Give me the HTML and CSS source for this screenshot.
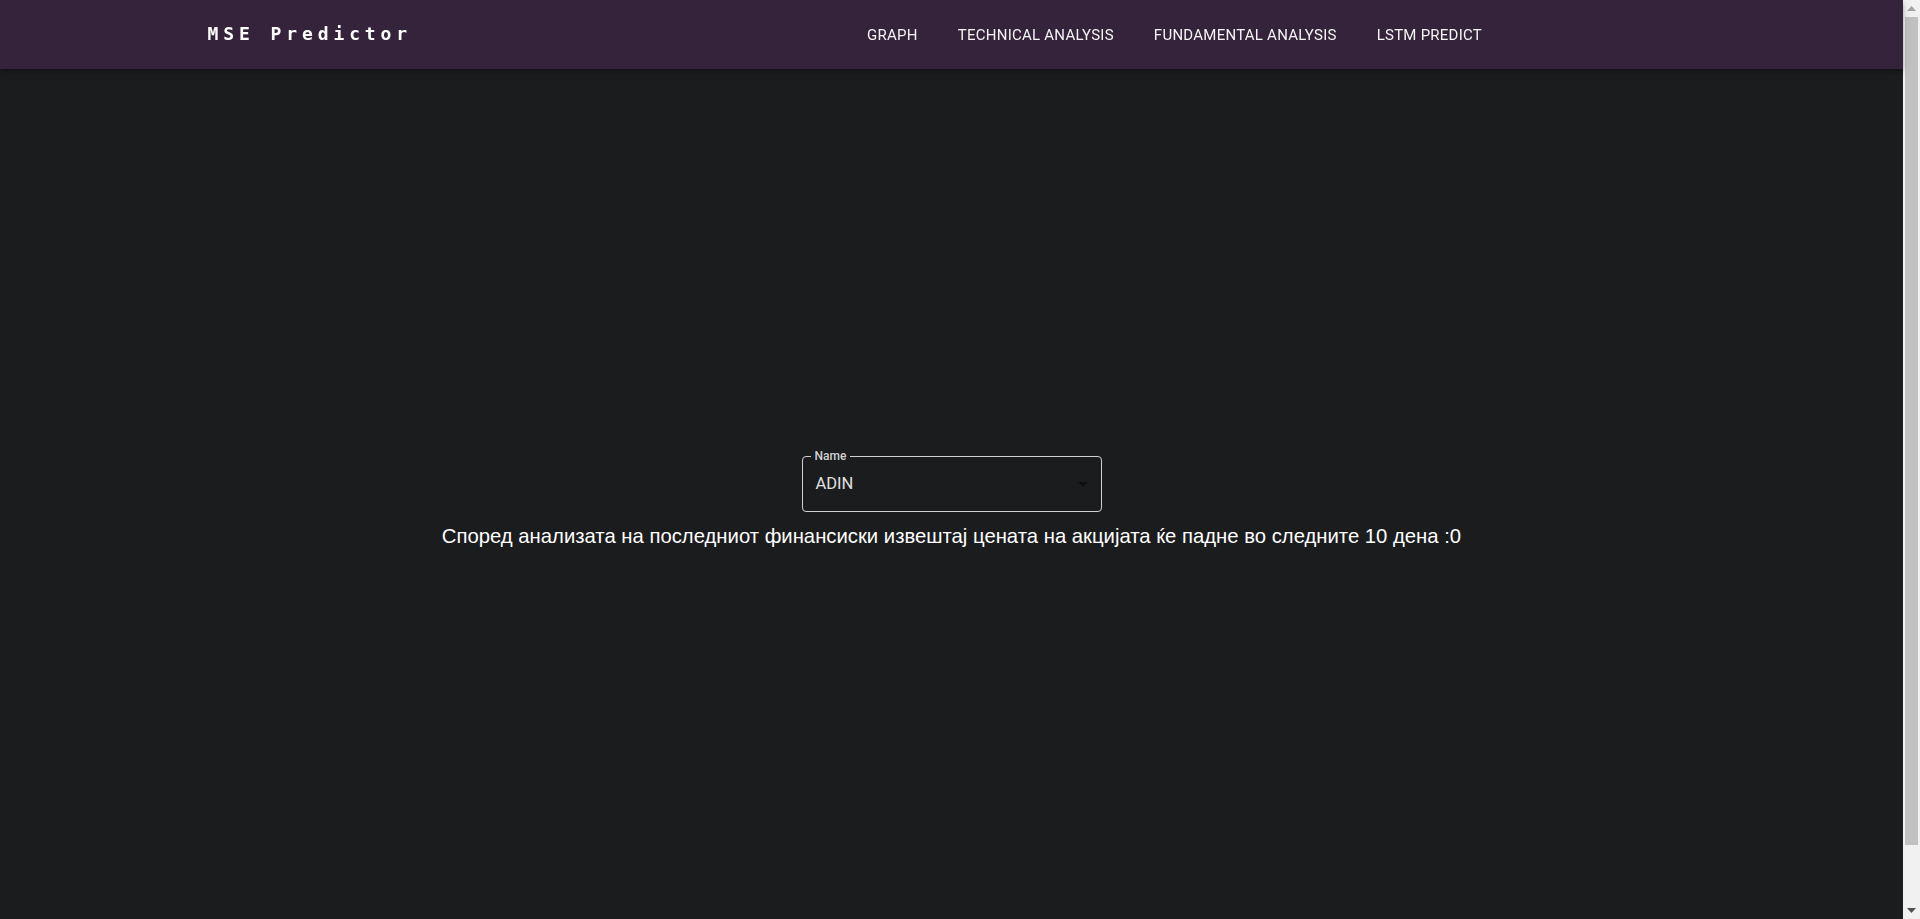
FILE: index.html
```html
<!DOCTYPE html>
<html lang="mk">
<head>
<meta charset="utf-8">
<title>MSE Predictor</title>
<link rel="stylesheet" href="styles.css">
</head>
<body>
<div class="page">
  <header class="appbar">
    <div class="container">
      <div class="logo">MSE Predictor</div>
      <nav class="nav">
        <a class="nav-btn" href="#">Graph</a>
        <a class="nav-btn" href="#">Technical Analysis</a>
        <a class="nav-btn" href="#">Fundamental Analysis</a>
        <a class="nav-btn" href="#">LSTM Predict</a>
      </nav>
    </div>
  </header>
  <main class="main">
    <div class="field">
      <fieldset class="outline"><legend class="legend">Name</legend></fieldset>
      <span class="value">ADIN</span>
      <svg class="arrow" viewBox="0 0 24 24" width="24" height="24"><path d="M7 10l5 5 5-5z"/></svg>
    </div>
    <p class="result">Според анализата на последниот финансиски извештај цената на акцијата ќе падне во следните 10 дена :0</p>
  </main>
</div>
<div class="scrollbar" aria-hidden="true">
  <div class="sb-btn"><svg width="9" height="5" viewBox="0 0 9 5"><path d="M0 5 L4.5 0 L9 5 Z" fill="#a3a3a3"/></svg></div>
  <div class="sb-track"><div class="sb-thumb"></div></div>
  <div class="sb-btn"><svg width="9" height="5" viewBox="0 0 9 5"><path d="M0 0 L4.5 5 L9 0 Z" fill="#505050"/></svg></div>
</div>
</body>
</html>
```

FILE: styles.css
```css
html {
  overflow: hidden;
}
html, body {
  margin: 0;
  padding: 0;
}
body {
  background: #1b1c1e;
  color: #fff;
  font-family: Roboto, "Liberation Sans", sans-serif;
}
.page {
  margin-right: 17px;
}

.appbar {
  background: #34233a;
  height: 69px;
  box-shadow: 0 2px 4px -1px rgba(0,0,0,0.2), 0 4px 5px 0 rgba(0,0,0,0.14), 0 1px 10px 0 rgba(0,0,0,0.12);
  position: relative;
  z-index: 1;
}
.container {
  max-width: 1536px;
  margin: 0 auto;
  padding: 0 24px;
  box-sizing: border-box;
  height: 100%;
  display: flex;
  align-items: center;
}
.logo {
  font-family: "DejaVu Sans Mono", monospace;
  font-weight: 700;
  font-size: 18px;
  letter-spacing: 4.9px;
  color: #fff;
  margin-top: -2px;
}
.nav {
  display: flex;
  margin-left: 435px;
}
.nav-btn {
  font-family: Roboto, sans-serif;
  font-weight: 400;
  font-size: 15px;
  text-transform: uppercase;
  letter-spacing: 0.25px;
  color: #f4f4f4;
  text-decoration: none;
  padding: 6px 8px;
  margin: 0 12px;
  line-height: 24px;
}

.main {
  min-height: 913px;
  box-sizing: border-box;
  padding-top: 387px;
  display: flex;
  flex-direction: column;
  align-items: center;
}
.field {
  position: relative;
  width: 300px;
  height: 56px;
  box-sizing: border-box;
  display: flex;
  align-items: center;
  padding: 0 14px;
}
.outline {
  position: absolute;
  inset: -5px 0 0 0;
  margin: 0;
  padding: 0 8px;
  border: 1px solid #d0d0d0;
  border-radius: 4px;
  pointer-events: none;
}
.legend {
  font-family: Roboto, sans-serif;
  font-size: 12px;
  font-weight: 500;
  color: #d0d0d0;
  padding: 0 4px;
  line-height: 11px;
}
.value {
  font-family: Roboto, sans-serif;
  font-size: 16.5px;
  color: #e0e0e0;
  margin-top: -1px;
}
.arrow {
  position: absolute;
  right: 7px;
  top: 16px;
  fill: #0f0f10;
}
.result {
  font-family: "Liberation Sans", Arial, sans-serif;
  font-size: 20.3px;
  line-height: 23px;
  margin: 13px 0 0;
  color: #fff;
}

.scrollbar {
  position: fixed;
  top: 0;
  right: 0;
  width: 17px;
  height: 100vh;
  background: #f1f1f1;
  display: flex;
  flex-direction: column;
}
.sb-btn {
  height: 17px;
  flex: none;
  display: flex;
  align-items: center;
  justify-content: center;
}
.sb-track {
  flex: 1;
  padding: 0 2px;
}
.sb-thumb {
  height: 828px;
  background: #c1c1c1;
}
```
